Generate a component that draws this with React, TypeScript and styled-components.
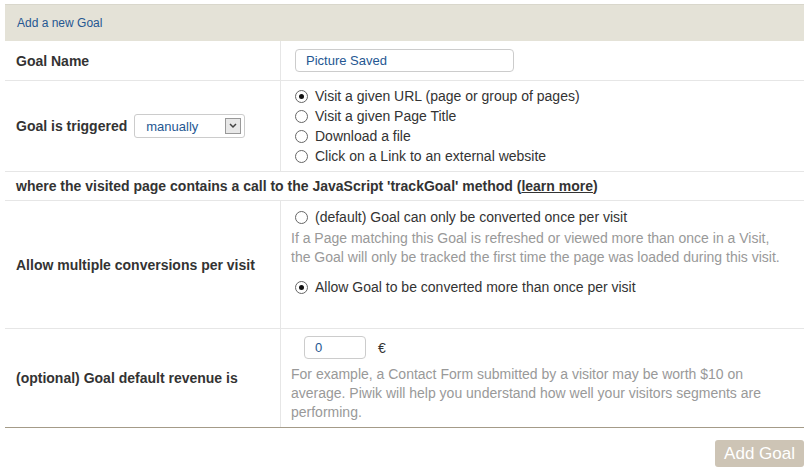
import React from "react";
import styled, { createGlobalStyle } from "styled-components";

const G = createGlobalStyle`
  body { margin: 0; background: #fff; font-family: "Liberation Sans", Arial, sans-serif; font-size: 14px; color: #444; }
`;
const Wrap = styled.div`padding: 4px 5px 0 5px;`;
const Table = styled.div`
  border-top: 1px solid #d9d7cc;
  border-bottom: 1px solid #a49b88;
  display: grid; grid-template-columns: 276px 1fr;
`;
const Head = styled.div`
  grid-column: 1 / 3; height: 36px; background: #e4e2d7; color: #255792;
  font-size: 12px; display: flex; align-items: center; padding-left: 12px;
`;
const Label = styled.div<{ $h: number }>`
  height: ${p => p.$h}px; box-sizing: border-box; border-bottom: 1px solid #e6e6e6;
  border-right: 1px solid #e6e6e6; display: flex; align-items: center; padding-left: 11px;
  font-weight: bold; color: #333; gap: 7px;
`;
const Cell = styled.div<{ $h: number; $pt?: number }>`
  height: ${p => p.$h}px; box-sizing: border-box; border-bottom: 1px solid #e6e6e6;
  padding: ${p => p.$pt ?? 0}px 12px 0 14px; display: flex; flex-direction: column;
  justify-content: ${p => (p.$pt !== undefined ? "flex-start" : "center")};
`;
const Full = styled.div`
  grid-column: 1 / 3; height: 29px; box-sizing: border-box; border-bottom: 1px solid #e6e6e6;
  padding-left: 11px; display: flex; align-items: center; font-weight: bold; color: #333;
  a { color: #333; text-decoration: underline; }
`;
const TextIn = styled.div<{ $w: number }>`
  width: ${p => p.$w}px; height: 23px; box-sizing: border-box; border: 1px solid #ccc; border-radius: 4px;
  color: #255792; padding-left: 10px; display: flex; align-items: center; font-size: 13px;
`;
const Select = styled.div`
  width: 111px; height: 24px; box-sizing: border-box; border: 1px solid #ccc; border-radius: 3px;
  display: flex; align-items: center; justify-content: space-between; padding: 0 3px 0 11px;
  font-weight: normal; color: #255792; font-size: 13px;
`;
const Arrow = styled.div`
  width: 16px; height: 16px; box-sizing: border-box; border: 1px solid #999; background: #e8e8e8;
  display: flex; align-items: center; justify-content: center;
`;
const Opt = styled.label`display: flex; align-items: center; gap: 7px; height: 20px; color: #333;`;
const Radio = styled.span<{ $on?: boolean }>`
  width: 11px; height: 11px; border-radius: 50%; border: 1px solid #666; background: #fff;
  display: inline-flex; align-items: center; justify-content: center;
  &::after { content: ""; width: 5px; height: 5px; border-radius: 50%; background: ${p => (p.$on ? "#111" : "transparent")}; }
`;
const Help = styled.div`color: #999; line-height: 19px;`;
const Row = styled.div`display: flex; align-items: center; gap: 12px; color: #333;`;
const Foot = styled.div`display: flex; justify-content: flex-end; padding-top: 12px;`;
const Btn = styled.div`
  background: #cdc4b5; color: #fff; font-size: 17px; border-radius: 3px;
  padding: 4px 9px; height: 19px; line-height: 19px;
`;

export default function App() {
  return (
    <Wrap>
      <G />
      <Table>
        <Head>Add a new Goal</Head>
        <Label $h={40}>Goal Name</Label>
        <Cell $h={40}><TextIn $w={219}>Picture Saved</TextIn></Cell>
        <Label $h={91}>Goal is triggered
          <Select>manually<Arrow><svg width="8" height="6" viewBox="0 0 8 6"><path d="M1 1l3 3 3-3" stroke="#444" strokeWidth="1.5" fill="none"/></svg></Arrow></Select>
        </Label>
        <Cell $h={91}>
          <Opt><Radio $on />Visit a given URL (page or group of pages)</Opt>
          <Opt><Radio />Visit a given Page Title</Opt>
          <Opt><Radio />Download a file</Opt>
          <Opt><Radio />Click on a Link to an external website</Opt>
        </Cell>
        <Full>where the visited page contains a call to the JavaScript 'trackGoal' method (<a>learn more</a>)</Full>
        <Label $h={128}>Allow multiple conversions per visit</Label>
        <Cell $h={128} $pt={6}>
          <Opt><Radio />(default) Goal can only be converted once per visit</Opt>
          <Help style={{ marginTop: 2, marginLeft: -4 }}>If a Page matching this Goal is refreshed or viewed more than once in a Visit, the Goal will only be tracked the first time the page was loaded during this visit.</Help>
          <Opt style={{ marginTop: 10 }}><Radio $on />Allow Goal to be converted more than once per visit</Opt>
        </Cell>
        <Label $h={98} style={{ borderBottom: "none" }}>(optional) Goal default revenue is</Label>
        <Cell $h={98} $pt={7} style={{ borderBottom: "none" }}>
          <Row style={{ paddingLeft: 9 }}><TextIn $w={62}>0</TextIn>€</Row>
          <Help style={{ marginTop: 6, marginLeft: -4 }}>For example, a Contact Form submitted by a visitor may be worth $10 on average. Piwik will help you understand how well your visitors segments are performing.</Help>
        </Cell>
      </Table>
      <Foot><Btn>Add Goal</Btn></Foot>
    </Wrap>
  );
}
